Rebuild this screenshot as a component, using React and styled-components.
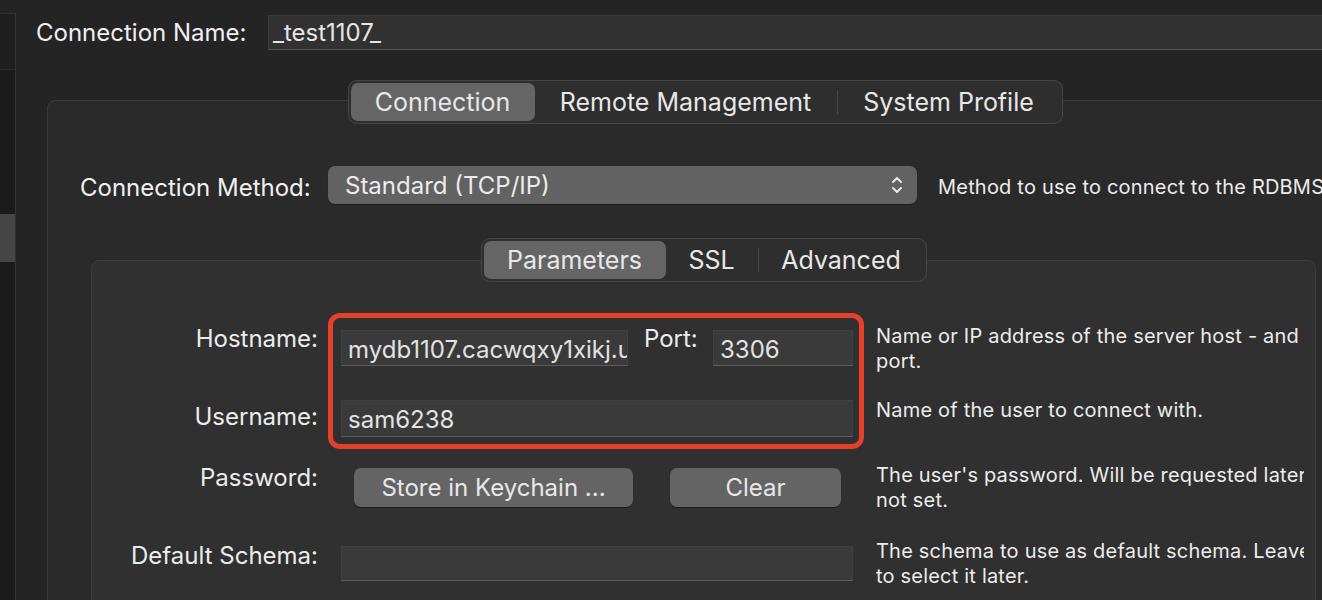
import React from "react";
import styled, { createGlobalStyle } from "styled-components";

const GlobalStyle = createGlobalStyle`
  html, body {
    margin: 0;
    padding: 0;
    background: #242424;
    overflow: hidden;
  }
  body {
    font-family: Inter, "Noto Sans", sans-serif;
    color: #e8e8e8;
    -webkit-font-smoothing: antialiased;
  }
`;

export default function App() {
  return (
    <>
      <GlobalStyle />
      <Window>
        <Sidebar>
          <SidebarHead />
          <SidebarItem />
        </Sidebar>
        <Main>
          <NameRow>
            <NameLabel>Connection Name:</NameLabel>
            <NameInput>_test1107_</NameInput>
          </NameRow>

          <OuterBox>
            <Tabs $top={-21}>
              <Tab $w={184} $active>Connection</Tab>
              <Tab $w={302}>Remote Management</Tab>
              <TabSep />
              <Tab $w={222}>System Profile</Tab>
            </Tabs>

            <MethodRow>
              <MethodLabel>Connection Method:</MethodLabel>
              <Select>
                <span>Standard (TCP/IP)</span>
                <svg width="12" height="24" viewBox="0 0 12 24" fill="none">
                  <path d="M2 9 L6 5 L10 9" stroke="#e6e6e6" strokeWidth="2" strokeLinecap="round" strokeLinejoin="round" />
                  <path d="M2 15 L6 19 L10 15" stroke="#e6e6e6" strokeWidth="2" strokeLinecap="round" strokeLinejoin="round" />
                </svg>
              </Select>
              <MethodHint>Method to use to connect to the RDBMS</MethodHint>
            </MethodRow>

            <InnerBox>
              <Tabs $top={-23}>
                <Tab $w={182} $active>Parameters</Tab>
                <Tab $w={92}>SSL</Tab>
                <TabSep />
                <Tab $w={165}>Advanced</Tab>
              </Tabs>

              <Fields>
                <Row $h={74}>
                  <Label>Hostname:</Label>
                  <Inline>
                    <Input $w={287} $h={36} $mt={6}>mydb1107.cacwqxy1xikj.us-east-1.rds.amazonaws.com</Input>
                    <PortLabel>Port:</PortLabel>
                    <Input $w={140} $h={36} $mt={6}>3306</Input>
                  </Inline>
                  <Hint>
                    Name or IP address of the server host - and
                    <br />
                    port.
                  </Hint>
                </Row>

                <Row $h={65}>
                  <Label $mt={4}>Username:</Label>
                  <Input $w={512} $h={37} $mt={2}>sam6238</Input>
                  <Hint>Name of the user to connect with.</Hint>
                </Row>

                <Row $h={76}>
                  <Label>Password:</Label>
                  <Buttons>
                    <Button $w={279}>Store in Keychain ...</Button>
                    <Button $w={171}>Clear</Button>
                  </Buttons>
                  <Hint>
                    The user's password. Will be requested later
                    <br />
                    not set.
                  </Hint>
                </Row>

                <Row $h={80}>
                  <Label $mt={2}>Default Schema:</Label>
                  <Input $w={512} $h={35} $mt={7} />
                  <Hint>
                    The schema to use as default schema. Leave blank
                    <br />
                    to select it later.
                  </Hint>
                </Row>
              </Fields>

              <Highlight />
            </InnerBox>
          </OuterBox>
        </Main>
      </Window>
    </>
  );
}

const Window = styled.div`
  display: flex;
  width: 1322px;
  height: 600px;
  overflow: hidden;
  background: #242424;
`;

const Sidebar = styled.aside`
  flex: 0 0 15px;
  margin-top: 13px;
  display: flex;
  flex-direction: column;
  background: #1b1b1b;
  border-top: 1px solid #303030;
  border-right: 1px solid #333333;
`;

const SidebarHead = styled.div`
  height: 55px;
  background: #1f1f1f;
  border-bottom: 1px solid #2c2c2c;
`;

const SidebarItem = styled.div`
  height: 48px;
  margin-top: 144px;
  background: #454545;
`;

const Main = styled.main`
  flex: 0 0 1400px;
  padding-top: 15px;
`;

const NameRow = styled.div`
  display: flex;
  align-items: center;
  height: 35px;
  padding-left: 20px;
`;

const NameLabel = styled.div`
  width: 232px;
  font-size: 24px;
  color: #f0f0f0;
`;

const NameInput = styled.div`
  width: 1100px;
  height: 35px;
  box-sizing: border-box;
  display: flex;
  align-items: center;
  padding: 0 4px;
  font-size: 24px;
  color: #e6e6e6;
  background: #313131;
  border: 1px solid #3a3a3a;
  border-bottom-color: #565656;
`;

const OuterBox = styled.section`
  display: flex;
  flex-direction: column;
  width: 1316px;
  min-height: 560px;
  margin: 50px 0 0 31px;
  box-sizing: border-box;
  background: #2a2a2a;
  border: 1px solid #3a3a3a;
  border-radius: 8px;
`;

const Tabs = styled.div`
  align-self: center;
  display: flex;
  align-items: center;
  height: 44px;
  box-sizing: border-box;
  margin-top: ${(p) => p.$top}px;
  padding: 2px;
  background: #2e2e2e;
  border: 1px solid #464646;
  border-radius: 9px;
  position: relative;
  z-index: 1;
`;

const Tab = styled.div`
  width: ${(p) => p.$w}px;
  height: 100%;
  display: flex;
  align-items: center;
  justify-content: center;
  font-size: 25px;
  color: #e8e8e8;
  border-radius: 7px;
  background: ${(p) => (p.$active ? "#656565" : "transparent")};
`;

const TabSep = styled.div`
  width: 1px;
  height: 24px;
  background: #474747;
`;

const MethodRow = styled.div`
  display: flex;
  align-items: center;
  height: 38px;
  margin-top: 42px;
  padding-left: 32px;
  white-space: nowrap;
`;

const MethodLabel = styled.div`
  width: 248px;
  padding-top: 5px;
  font-size: 24px;
  color: #f0f0f0;
`;

const Select = styled.div`
  width: 589px;
  height: 38px;
  box-sizing: border-box;
  display: flex;
  align-items: center;
  justify-content: space-between;
  padding: 0 14px 0 17px;
  font-size: 24px;
  color: #ececec;
  background: #626262;
  border-radius: 7px;
  box-shadow: 0 1px 1px rgba(0, 0, 0, 0.35);
`;

const MethodHint = styled.div`
  margin-left: 21px;
  padding-top: 3px;
  font-size: 20px;
  letter-spacing: 0.2px;
  color: #ececec;
`;

const InnerBox = styled.section`
  position: relative;
  display: flex;
  flex-direction: column;
  min-height: 360px;
  margin: 56px 46px 0 43px;
  background: #303030;
  border: 1px solid #3d3d3d;
  border-radius: 8px;
`;

const Fields = styled.div`
  margin-top: 42px;
  display: flex;
  flex-direction: column;
`;

const Row = styled.div`
  display: grid;
  grid-template-columns: 226px 512px 1fr;
  column-gap: 23px;
  align-items: start;
  height: ${(p) => p.$h}px;
  padding-right: 11px;
`;

const Label = styled.div`
  margin-top: ${(p) => p.$mt || 0}px;
  font-size: 24px;
  line-height: 29px;
  text-align: right;
  color: #ececec;
  white-space: nowrap;
`;

const Inline = styled.div`
  display: flex;
  align-items: flex-start;
`;

const PortLabel = styled.div`
  width: 69px;
  margin-left: 16px;
  font-size: 24px;
  line-height: 29px;
  color: #ececec;
`;

const Input = styled.div`
  width: ${(p) => p.$w}px;
  height: ${(p) => p.$h}px;
  margin-top: ${(p) => p.$mt}px;
  box-sizing: border-box;
  display: flex;
  align-items: center;
  padding: 2px 6px 0;
  overflow: hidden;
  white-space: nowrap;
  font-size: 24px;
  color: #e2e2e2;
  background: #3a3a3a;
  border: 1px solid #404040;
  border-bottom-color: #5c5c5c;
`;

const Buttons = styled.div`
  display: flex;
  gap: 37px;
  margin-top: 5px;
  padding-left: 13px;
`;

const Button = styled.div`
  width: ${(p) => p.$w}px;
  height: 39px;
  display: flex;
  align-items: center;
  justify-content: center;
  font-size: 24px;
  color: #e8e8e8;
  background: #646464;
  border-radius: 7px;
  box-shadow: 0 1px 1px rgba(0, 0, 0, 0.4);
`;

const Hint = styled.div`
  font-size: 20px;
  line-height: 25px;
  letter-spacing: 0.2px;
  color: #ececec;
  white-space: nowrap;
  overflow: hidden;
`;

const Highlight = styled.div`
  position: absolute;
  left: 236px;
  top: 52px;
  width: 536px;
  height: 136px;
  box-sizing: border-box;
  border: 5px solid #e5402a;
  border-radius: 12px;
  pointer-events: none;
`;
